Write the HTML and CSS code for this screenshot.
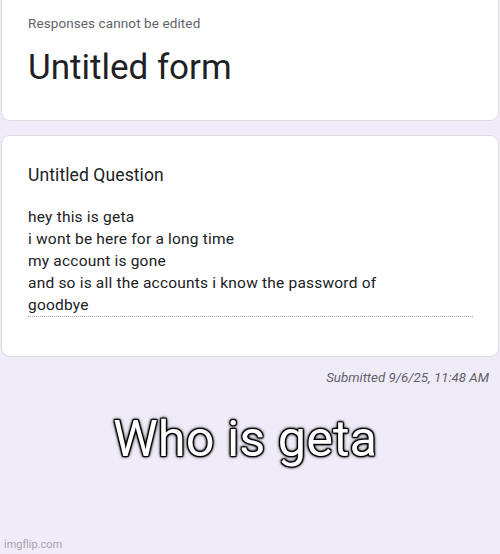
FILE: index.html
```html
<!DOCTYPE html>
<html>
<head>
<meta charset="utf-8">
<link rel="stylesheet" href="styles.css">
</head>
<body>
<div class="page">
  <div class="card card-head">
    <div class="note">Responses cannot be edited</div>
    <div class="title">Untitled form</div>
  </div>
  <div class="card card-q">
    <div class="question">Untitled Question</div>
    <div class="answer">hey this is geta<br>i wont be here for a long time<br>my account is gone<br>and so is all the accounts i know the password of<br>goodbye</div>
  </div>
  <div class="submitted">Submitted 9/6/25, 11:48 AM</div>
  <div class="meme">Who is geta</div>
  <div class="watermark">imgflip.com</div>
</div>
</body>
</html>
```
FILE: styles.css
```css
html, body {
  margin: 0;
  padding: 0;
}
body {
  background: #f0ebf8;
  font-family: Roboto, "Noto Sans", sans-serif;
  color: #202124;
}
.page {
  position: relative;
  width: 500px;
  height: 554px;
  padding: 0 1px;
  box-sizing: border-box;
  overflow: hidden;
}
.card {
  background: #fff;
  border: 1px solid #dadce0;
  border-radius: 9px;
  box-sizing: border-box;
}
.card-head {
  height: 121px;
  border-top: none;
  border-top-left-radius: 0;
  border-top-right-radius: 0;
  padding: 13px 25px 0 26px;
}
.note {
  font-size: 13.5px;
  line-height: 20px;
  color: #5f6368;
  letter-spacing: 0.1px;
}
.title {
  margin-top: 15px;
  font-size: 35px;
  line-height: 40px;
  color: #202124;
}
.card-q {
  margin-top: 14px;
  height: 222px;
  padding: 27px 25px 0 26px;
}
.question {
  font-size: 17.5px;
  line-height: 24px;
  letter-spacing: 0.1px;
}
.answer {
  margin-top: 19px;
  font-size: 15.5px;
  line-height: 22px;
  letter-spacing: 0.2px;
  border-bottom: 1px dotted #9aa0a6;
}
.submitted {
  margin-top: 11px;
  padding-right: 10px;
  text-align: right;
  font-size: 13.3px;
  line-height: 20px;
  font-style: italic;
  color: #5f6368;
}
.meme {
  margin-top: 23px;
  text-align: center;
  padding-right: 10px;
  font-size: 50.5px;
  line-height: 56px;
  color: #fff;
  text-shadow:
    0 0 2px #000, 0 0 2px #000, 0 0 3px #000, 0 0 4px #000,
    1px 1px 1px #000, -1px -1px 1px #000, 1px -1px 1px #000, -1px 1px 1px #000;
}
.watermark {
  position: absolute;
  left: 4px;
  bottom: 3px;
  font-size: 11px;
  line-height: 13px;
  color: #a8a4ae;
}
```
